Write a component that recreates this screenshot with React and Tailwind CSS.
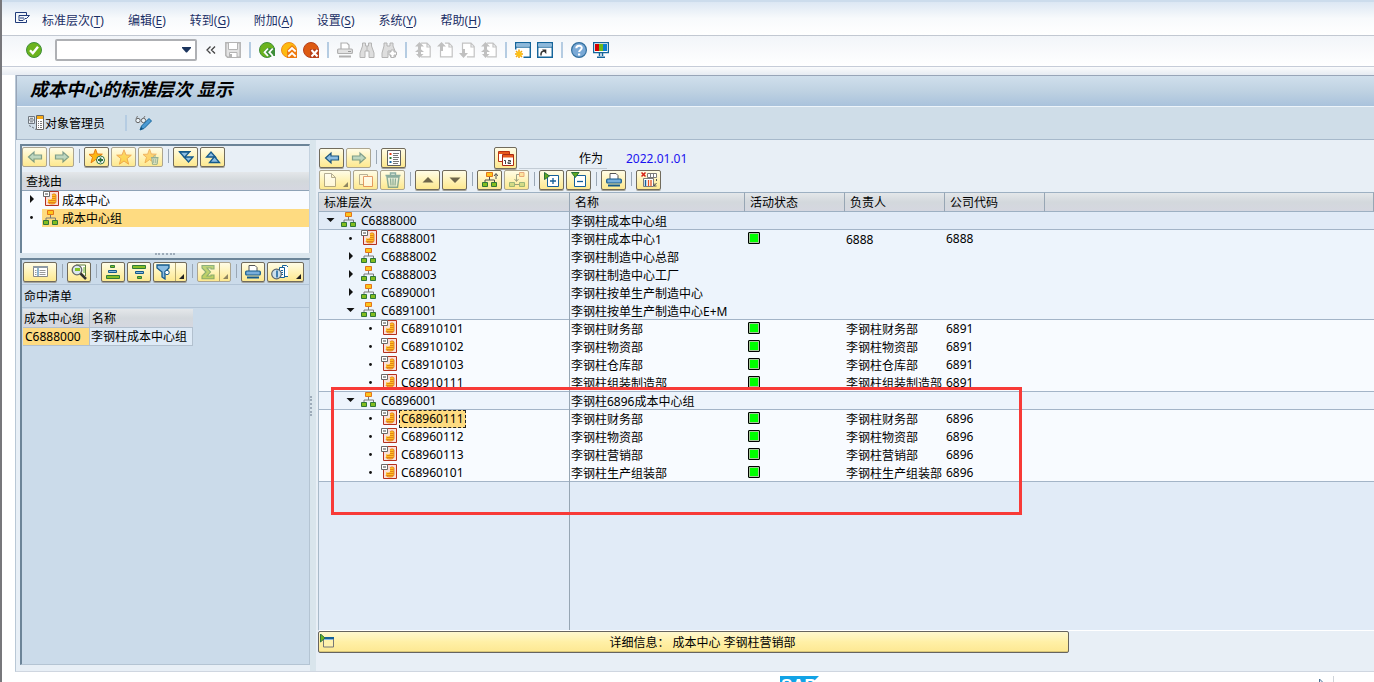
import React from "react";

const svgProps = { width: 16, height: 16, viewBox: "0 0 16 16", fill: "none", "aria-hidden": true, className: "block shrink-0" };
const Svg = ({ children, ...rest }) => <svg {...svgProps} {...rest}>{children}</svg>;

/* ---------- icons ---------- */
const icons = {
  check: (
    <Svg>
      <circle cx="8" cy="8" r="7.5" fill="#6cb31e" stroke="#3f8f3a" />
      <path d="M4 8.2l2.8 3L12 4.8" stroke="#fff" strokeWidth="2.4" />
    </Svg>
  ),
  save: (
    <Svg>
      <path d="M.8.8h14.4v14.4H2.5L.8 13.5z" fill="#e3e3e3" stroke="#b4b4b4" strokeWidth="1.5" />
      <path d="M3.5 1v6.5h9V1M4.5 15v-4.500h7.500V15" fill="#fff" stroke="#b4b4b4" />
      <path d="M6 12v3" stroke="#b4b4b4" strokeWidth="2" />
    </Svg>
  ),
  back: (
    <Svg>
      <circle cx="8" cy="8" r="7.5" fill="#6cb31e" stroke="#3f8f3a" />
      <path d="M4 10l4-4h8v8H8z" fill="#3f8f3a" />
      <path d="M9 6.500L5.500 10.200 9 14M13.800 6.500l-3.500 3.700 3.500 3.800" stroke="#fff" strokeWidth="1.800" />
    </Svg>
  ),
  exit: (
    <Svg>
      <circle cx="8" cy="8" r="7.5" fill="#fdbb10" stroke="#ee8a1c" />
      <path d="M6 8l5-5 5 5v8H6z" fill="#ee7a10" />
      <path d="M7.300 9.500L11 6l3.700 3.500M7.300 14.500L11 11l3.700 3.500" stroke="#fff" strokeWidth="1.800" />
    </Svg>
  ),
  cancel: (
    <Svg>
      <circle cx="8" cy="8" r="7.500" fill="#dd5a12" stroke="#b5401c" />
      <path d="M7 7h9v9H7z" fill="#b8401a" />
      <path d="M8.500 8l6 6.500M14.500 8l-6 6.500" stroke="#fff" strokeWidth="2" />
    </Svg>
  ),
  printGray: (
    <Svg>
      <path d="M4 7V1h6l2 2v4" fill="#fff" stroke="#b0b0b0" strokeWidth="1.200" />
      <rect x=".6" y="7" width="14.800" height="4.500" rx="1" fill="#e2e2e2" stroke="#b0b0b0" strokeWidth="1.200" />
      <path d="M2 14.500h12" stroke="#b0b0b0" strokeWidth="2" />
      <path d="M11 9.500h3" stroke="#999" />
    </Svg>
  ),
  find: (
    <Svg>
      <path d="M3.500 1h3v3h3V1h3v3l2.500 7v4.500h-5V9h-4v6.500H1V11l2.500-7z" fill="#dedede" stroke="#b4b4b4" />
      <path d="M8 4v5" stroke="#b4b4b4" />
    </Svg>
  ),
  findNext: (
    <Svg>
      <path d="M3 1h3v3h3V1h3v3l2.500 6v5h-5V9H7v6.500H1V11l2-7z" fill="#dedede" stroke="#b4b4b4" />
      <path d="M10 8h3v2h2.500v3H13v2.500h-3V13H8v-3h2z" fill="#fff" stroke="#b4b4b4" />
    </Svg>
  ),
  pageFirst: (
    <Svg>
      <path d="M6 1.200h6l3.200 3.200v10.400H6M12 1v4h3.500" fill="#fff" stroke="#c3c3c3" strokeWidth="1.200" />
      <path d="M4.500 0L9 4.500H6V7H3V4.500H0zM4.500 6L9 10H6v2h2.500L4.500 16 1 12h2v-2H0z" fill="#c0c0c0" />
    </Svg>
  ),
  pageUp: (
    <Svg>
      <path d="M3.500 8v6.800h11.700V4.400L12 1.200H8M12 1v4h3.500" fill="#fff" stroke="#c3c3c3" strokeWidth="1.200" />
      <path d="M4.500 0L9 4.500H6V9H3V4.500H0z" fill="#c0c0c0" />
    </Svg>
  ),
  pageDown: (
    <Svg>
      <path d="M3.500 8V1.200H12l3.200 3.200v10.400H8M12 1v4h3.500" fill="#fff" stroke="#c3c3c3" strokeWidth="1.200" />
      <path d="M4.500 16L9 11H6V7H3v4H0z" fill="#c0c0c0" />
    </Svg>
  ),
  newSession: (
    <Svg>
      <path d="M.7.7h14.600v14.600H.7z" fill="#fff" stroke="#15659b" strokeWidth="1.500" />
      <path d="M1.400 1.400h13.200v3.200H1.400z" fill="#8db9dc" />
      <path d="M1 5.200h14" stroke="#15659b" />
      <path d="M0 7.500h8.500V16H0z" fill="#fff" />
      <path d="M4 7.500v8.500M0 12h8M1 9l6 6M7 9l-6 6" stroke="#f5a60c" strokeWidth="1.500" />
      <circle cx="4" cy="12" r="2.500" fill="#fdc313" />
    </Svg>
  ),
  shortcut: (
    <Svg>
      <path d="M.7.7h14.600v14.600H.7z" fill="#fff" stroke="#15659b" strokeWidth="1.500" />
      <path d="M1.400 1.400h13.200v3.200H1.400z" fill="#8db9dc" />
      <path d="M1 5.200h14" stroke="#15659b" />
      <path d="M4 13.500c-.3-2.800.6-4.200 3-4.500" stroke="#333" strokeWidth="1.500" />
      <path d="M5 7.500h4.300V12z" fill="#333" />
    </Svg>
  ),
  help: (
    <Svg>
      <circle cx="8" cy="8" r="7.400" fill="#7aa9d6" stroke="#33709f" strokeWidth="1.200" />
      <path d="M5.300 6.200C5.300 2.700 11 2.900 10.800 6c-.1 1.900-2.700 2-2.700 4" stroke="#fff" strokeWidth="2" />
      <path d="M7 11.500h2.200v2H7z" fill="#fff" />
    </Svg>
  ),
  layout: (
    <Svg>
      <path d="M.6.600h14.800v10H.6z" fill="#fff" stroke="#15659b" strokeWidth="1.300" />
      <path d="M2 2h4v7H2z" fill="#d40000" />
      <path d="M6 2h4v7H6z" fill="#6cb81a" />
      <path d="M10 2h4v7h-4z" fill="#0a7fd0" />
      <path d="M6.500 11v3M9.500 11v3M4 15.200h8" stroke="#15659b" strokeWidth="1.500" />
    </Svg>
  ),
  menu: (
    <Svg>
      <path d="M11.500 4V1.500h-11v10h11V9" stroke="#1f3a7a" />
      <path d="M4 4.500h10.500l-3 3H10L8 9.500H4v-2M4 4.500v3M5 7h4" stroke="#1f3a7a" />
    </Svg>
  ),
  objMgr: (
    <Svg>
      <path d="M.5 1.500h6v7h-6zM.5 5h6" fill="#e9edf1" stroke="#707880" />
      <path d="M2 3.300h3M2 6.800h3M1 10.500l2 1M4 12l2 1.200M7 14l1 .5" stroke="#707880" />
      <path d="M8.500.5h7v14h-7z" fill="#fff" stroke="#666" />
      <path d="M9 1h6v3H9z" fill="#f7aa17" />
      <path d="M10 6.500h1M12 6.500h2M10 8.500h1M12 8.500h2M10 10.500h1M12 10.500h2M10 12.500h1M12 12.500h2" stroke="#777" />
    </Svg>
  ),
  glasses: (
    <Svg width="17" height="16" viewBox="0 0 17 16">
      <path d="M1 4l1.500-3M8 4l2-3" stroke="#777" />
      <circle cx="3" cy="5.500" r="2.200" fill="#e9f2f8" stroke="#666" />
      <circle cx="8.500" cy="5.500" r="2.200" fill="#e9f2f8" stroke="#666" />
      <path d="M5 15l1.500-4L14 3.500 16.500 6 9 13.500z" fill="#4b9ad3" stroke="#15659b" />
      <path d="M5 15l1.200-3 1.800 1.800z" fill="#15507d" />
    </Svg>
  ),
  left: <Svg><path d="M1.500 8L7 3v3h7.500v4H7v3z" fill="#8abce2" stroke="#1c567f" strokeWidth="1.200" /></Svg>,
  right: <Svg><path d="M14.500 8L9 3v3H1.500v4H9v3z" fill="#93c4c4" stroke="#2d6868" strokeWidth="1.200" /></Svg>,
  leftDim: <Svg><path d="M1.500 8L7 3v3h7.500v4H7v3z" fill="#93c4c4" stroke="#2d6868" strokeWidth="1.200" /></Svg>,
  star: <Svg><path d="M8 .8l2 5.200 5.300.2-4.200 3.400 1.500 5.600L8 12l-4.600 3.200 1.500-5.600L.7 6.200 6 6z" fill="#fcc419" stroke="#e87a10" /></Svg>,
  starAdd: (
    <Svg>
      <path d="M6.500 0l1.800 5 5 .2-4 3.200 1.500 5-4.300-2.800-4.500 3.200 1.500-5.500-3.500-2.900 4.700-.2z" fill="#fdb813" stroke="#e87a10" />
      <circle cx="11.500" cy="11" r="4" fill="#fff" stroke="#2e7040" />
      <path d="M11.500 8.500v5M9 11h5" stroke="#2e7040" strokeWidth="1.800" />
    </Svg>
  ),
  starDel: (
    <Svg>
      <path d="M6.500 0l1.800 5 5 .2-4 3.200 1.500 5-4.300-2.800-4.500 3.200 1.500-5.500-3.500-2.900 4.700-.2z" fill="#fdc13a" stroke="#e88a20" />
      <path d="M8.800 9l.7 6.300h4.600l.8-6.300z" fill="#e0ede9" stroke="#4d8580" />
      <path d="M8 8.500h7.500M10.500 7h2.500M10.800 10v4M12.800 10v4" stroke="#4d8580" />
    </Svg>
  ),
  expandAll: <Svg><path d="M6 8h9l-4.500 5z" fill="#8cbde2" stroke="#155a8c" strokeWidth="1.300" /><path d="M1.500 3h10l-5 5.500z" fill="#8cbde2" stroke="#155a8c" strokeWidth="1.300" /><path d="M1 2.500h12" stroke="#155a8c" /></Svg>,
  collapseAll: <Svg><path d="M1.500 8h9L6 3z" fill="#8cbde2" stroke="#155a8c" strokeWidth="1.300" /><path d="M4.500 13.500h10L9.500 7.500z" fill="#8cbde2" stroke="#155a8c" strokeWidth="1.300" /></Svg>,
  list: (
    <Svg>
      <path d="M1.500.5h13v15h-13z" fill="#fff" stroke="#5f5f5f" />
      <path d="M3.500 3h2v2h-2z" fill="#e5401a" />
      <path d="M3.500 7h2v2h-2z" fill="#2d7f35" />
      <path d="M3.500 11h2v2h-2z" fill="#1768a5" />
      <path d="M7 3.500h6M7 5.500h5M7 7.500h6M7 9.500h5M7 11.500h6M7 13.500h5" stroke="#777" />
    </Svg>
  ),
  calendar: (
    <Svg width="17" height="17" viewBox="0 0 17 17">
      <path d="M1.500 1.500h11v10h-11z" fill="#fff" stroke="#b73216" />
      <path d="M2 2h10v2H2z" fill="#e75a1c" />
      <path d="M5.500 4.500h11v11h-11z" fill="#fff" stroke="#a92a15" />
      <path d="M6 5h10v2.500H6z" fill="#e75a1c" />
      <path d="M7 10.500h1.500V14M11 10.500h2.500V12H11v1.500h3" stroke="#444" />
    </Svg>
  ),
  newDoc: <Svg><path d="M2.500 1.500h7l4 4v9h-11z M9.500 1.500v4h4" fill="#fff" stroke="#857c6b" /></Svg>,
  copy: (
    <Svg>
      <path d="M1.500 2.500h8v10h-8z" fill="#fff8df" stroke="#8b8270" />
      <path d="M5.500 4.500h9v10h-9z" fill="#fff" stroke="#d2612f" />
    </Svg>
  ),
  trash: (
    <Svg>
      <path d="M.5 3.500h15M5.500 3V1h5v2M2 5l1.500 10.300h9L14 5z" fill="#d9ebe8" stroke="#3d7c80" strokeWidth="1.400" />
      <path d="M5.500 6.500l.5 7M8 6.500v7M10.500 6.500l-.5 7" stroke="#3d7c80" strokeWidth="1.200" />
    </Svg>
  ),
  triUp: <Svg><path d="M2.500 10.500h11L8 5z" fill="#6e664b" /></Svg>,
  triDown: <Svg><path d="M2.500 5.500h11L8 11z" fill="#6e664b" /></Svg>,
  org: (
    <Svg>
      <path d="M7.500 5v3M3 10V8h9.500v2" stroke="#787878" />
      <path d="M4.500.500h6v4h-6z" fill="#fdc61c" stroke="#e4731b" />
      <path d="M.5 10.500h5v4h-5zM9.500 10.500h5v4h-5z" fill="#82bd1e" stroke="#2f7638" />
    </Svg>
  ),
  orgUp: (
    <Svg>
      <path d="M7.500 5v3M3 10V8h9.500v2M14 7V2M12 4l2-2.500 2 2.500" stroke="#4e4e4e" />
      <path d="M4.500.500h6v4h-6z" fill="#fdc61c" stroke="#e4731b" />
      <path d="M.5 10.500h5v4h-5zM9.500 10.500h5v4h-5z" fill="#82bd1e" stroke="#2f7638" />
    </Svg>
  ),
  orgMove: (
    <Svg>
      <path d="M10 2.500H7.500V9M5.500 7l2 2.500 2-2.500M5 12.500h5" stroke="#5c6b5f" />
      <path d="M10.500.500h4.500v4h-4.500z" fill="#fdd67a" stroke="#df763d" />
      <path d="M.5 10.500h5v4h-5zM10.500 10.500h5v4h-5z" fill="#b5cf71" stroke="#5b925c" />
    </Svg>
  ),
  expandNode: (
    <Svg>
      <path d="M3.500 3.500h11v11h-11z" fill="#fff" stroke="#15609a" />
      <path d="M9 6v6M6 9h6" stroke="#15609a" strokeWidth="1.300" />
      <path d="M.5.5l5 3.500-5 3.500z" fill="#5fa71f" stroke="#28703a" />
    </Svg>
  ),
  collapseNode: (
    <Svg>
      <path d="M3.500 3.500h11v11h-11z" fill="#fff" stroke="#15609a" />
      <path d="M6 9.500h6" stroke="#15609a" strokeWidth="1.300" />
      <path d="M.5.500h7.500L4.300 5.500z" fill="#5fa71f" stroke="#28703a" />
    </Svg>
  ),
  print: (
    <Svg>
      <path d="M4 7V1.500h6l2 2V7" fill="#fff" stroke="#555" />
      <rect x=".7" y="7" width="14.600" height="4" rx="1" fill="#78aedb" stroke="#155a8c" strokeWidth="1.200" />
      <path d="M2 13.500h12" stroke="#155a8c" strokeWidth="2" />
    </Svg>
  ),
  report: (
    <Svg>
      <path d="M6.500 1.500h9v4h-9zM9.500 1.500v4M12.500 1.500v4M2.500 6.500h10v8h-10z" fill="#fff" stroke="#7b7b7b" />
      <path d="M.5.500l4 4M4.500.500l-4 4" stroke="#d72216" strokeWidth="1.500" />
      <path d="M4.500 8v6" stroke="#15609a" strokeWidth="1.500" />
      <path d="M7.500 8v6M10 8v6" stroke="#e3501c" strokeWidth="1.300" />
      <path d="M15.500 7v2M15.500 11l-2.500 3M13 11.500V14h2.500" stroke="#555" />
    </Svg>
  ),
  center: (
    <Svg>
      <path d="M2.500.500h13v14h-13z" fill="#fbe0d8" stroke="#b5301e" />
      <path d="M9 4c0-1.500 4-1.500 4 0v6.500c0 2-2 2.500-4 2.500-2.500 0-4-.8-4-2V8c1 1 4 .8 4-1z" fill="#fdc023" />
      <path d="M9 4c0-1.500 4-1.500 4 0v6.500c0 2-2 2.500-4 2.500-2.500 0-4-.8-4-2M9 5.500h3.500M9 7.500h3.500M6 9.500h6.500M6 11.500h6" stroke="#de7417" strokeWidth=".8" />
      <path d="M.500.500h6v5h-6z" fill="#fff" stroke="#6a6a6a" />
      <path d="M2 3h3" stroke="#444" />
    </Svg>
  ),
  detail: (
    <Svg>
      <path d="M1.500 2.500h14v10h-14z" fill="#fff" stroke="#888" />
      <path d="M1 2h15v2H1z" fill="#8f9aa3" />
      <path d="M6 4v8" stroke="#1c6aa0" />
      <path d="M3 6.500h1.500M3 8.500h1.500M3 10.500h1.500M7.500 6.500h6M7.500 8.500h6M7.500 10.500h6" stroke="#999" />
    </Svg>
  ),
  search: (
    <Svg>
      <path d="M5 1h9.500v11" fill="#fff" stroke="#5f7f40" />
      <path d="M12 4h2M12 6h2M12 8h2" stroke="#6cb31e" />
      <circle cx="6" cy="6" r="4.800" fill="#dbe8ee" stroke="#666" strokeWidth="1.300" />
      <path d="M4 4h5v3H4z" fill="#85c226" />
      <path d="M9.500 9.500l5.500 5.500" stroke="#333" strokeWidth="2.500" />
    </Svg>
  ),
  asc: <Svg><path d="M5.500 1.500h4v2h-4zM1.500 11.500h13v3h-13z" fill="#86bd25" stroke="#2f7c3a" /><path d="M3.500 6.500h8v2h-8z" fill="#86b7dd" stroke="#155a8c" /></Svg>,
  desc: <Svg><path d="M1.500 1.500h13v3h-13zM6.500 12.500h4v2h-4z" fill="#86bd25" stroke="#2f7c3a" /><path d="M4.500 7.500h8v2h-8z" fill="#86b7dd" stroke="#155a8c" /></Svg>,
  filter: <Svg><path d="M1 1h12v3L9 8v7l-3-2V8L1 4z" fill="#8bbde3" stroke="#155a8c" strokeWidth="1.300" /><circle cx="11" cy="8.500" r="2.200" stroke="#155a8c" fill="#fff" /></Svg>,
  sum: <Svg><path d="M2 1.500h12V5h-3V4H7l3.500 4L7 12h4v-1h3v3.700H2V12l4-4-4-4z" fill="#94bd3c" stroke="#408044" strokeWidth="1.100" /></Svg>,
  view: (
    <Svg width="18">
      <path d="M11.500 1.500h4l2 2v9h-6z" fill="#fff" stroke="#15609a" />
      <path d="M8.500 3.500h5v10h-5z" fill="#fff" stroke="#15609a" />
      <path d="M10 6.500h2M10 8.500h2M10 10.500h2" stroke="#15609a" />
      <circle cx="5.500" cy="10" r="4.800" fill="#cbdfed" stroke="#5d676e" strokeWidth="1.200" />
      <path d="M6 6.500v7" stroke="#15609a" strokeWidth="1.500" />
    </Svg>
  ),
  openDetail: (
    <Svg>
      <path d="M4.500 4.500h10V13h-10z" fill="#fff1ae" stroke="#777" />
      <path d="M4 4h11" stroke="#15609a" strokeWidth="2" />
      <path d="M5 5.500h9" stroke="#8db9dc" />
      <path d="M1.500 0v8l4.500-4z" fill="#6cb31e" stroke="#2e7440" />
    </Svg>
  ),
};

/* ---------- small building blocks ---------- */
const Sep = () => (
  <span className="flex h-4 w-1.5 shrink-0 justify-center">
    <span className="h-3.5 w-px bg-[#9aa7b5]" />
  </span>
);

const BlueSep = () => (
  <span className="flex h-4 w-1.5 shrink-0 justify-center">
    <span className="h-4 w-0.5 bg-[#b5cce2]" />
  </span>
);

function IconButton({ icon, label, disabled }) {
  return (
    <button type="button" aria-label={label} disabled={disabled} className="block h-4 w-4 shrink-0">
      {icons[icon]}
    </button>
  );
}

function ToolButton({ icon, label, dim, width = "w-[25px]", height = "h-5", drop, split }) {
  return (
    <button
      type="button"
      aria-label={label}
      disabled={dim}
      className={`relative flex shrink-0 items-center rounded-xs border bg-linear-to-b from-[#fffce6] via-[#fff3b8] to-[#fde88f] ${width} ${height} ${
        drop ? "justify-start pl-0.5" : "justify-center"
      } ${dim ? "border-[#aca590]" : "border-[#716b5c] shadow-[0_1px_0_#a3a29a]"}`}
    >
      <span className={dim ? "opacity-60" : ""}>{icons[icon]}</span>
      {split && <span className="absolute inset-y-0 right-2.5 w-px bg-[#b3a671]" />}
      {drop && (
        <svg className={`absolute right-0.5 bottom-0.5 ${dim ? "opacity-50" : ""}`} width="5" height="5" viewBox="0 0 5 5" aria-hidden="true">
          <path d="M5 0v5H0z" fill="#222" />
        </svg>
      )}
    </button>
  );
}

function Marker({ kind }) {
  return (
    <svg width="20" height="18" viewBox="0 0 20 18" className="block shrink-0" aria-hidden="true">
      {kind === "open" && <path d="M5.500 6h8L9.500 10z" fill="#111" />}
      {kind === "closed" && <path d="M8 4v8l4-4z" fill="#111" />}
      {kind === "leaf" && <circle cx="9.500" cy="8.500" r="1.400" fill="#111" />}
    </svg>
  );
}

/* ---------- data ---------- */
const menus = [
  ["标准层次", "T"], ["编辑", "E"], ["转到", "G"], ["附加", "A"], ["设置", "S"], ["系统", "Y"], ["帮助", "H"],
];

const rows = [
  { id: "C6888000", level: 0, kind: "open", name: "李钢柱成本中心组", line: true },
  { id: "C6888001", level: 1, kind: "leaf", name: "李钢柱成本中心1", owner: "6888", code: "6888" },
  { id: "C6888002", level: 1, kind: "closed", name: "李钢柱制造中心总部" },
  { id: "C6888003", level: 1, kind: "closed", name: "李钢柱制造中心工厂" },
  { id: "C6890001", level: 1, kind: "closed", name: "李钢柱按单生产制造中心" },
  { id: "C6891001", level: 1, kind: "open", name: "李钢柱按单生产制造中心E+M", line: true },
  { id: "C68910101", level: 2, kind: "leaf", name: "李钢柱财务部", owner: "李钢柱财务部", code: "6891" },
  { id: "C68910102", level: 2, kind: "leaf", name: "李钢柱物资部", owner: "李钢柱物资部", code: "6891" },
  { id: "C68910103", level: 2, kind: "leaf", name: "李钢柱仓库部", owner: "李钢柱仓库部", code: "6891" },
  { id: "C68910111", level: 2, kind: "leaf", name: "李钢柱组装制造部", owner: "李钢柱组装制造部", code: "6891", line: true },
  { id: "C6896001", level: 1, kind: "open", name: "李钢柱6896成本中心组", line: true },
  { id: "C68960111", level: 2, kind: "leaf", name: "李钢柱财务部", owner: "李钢柱财务部", code: "6896", selected: true },
  { id: "C68960112", level: 2, kind: "leaf", name: "李钢柱物资部", owner: "李钢柱物资部", code: "6896" },
  { id: "C68960113", level: 2, kind: "leaf", name: "李钢柱营销部", owner: "李钢柱营销部", code: "6896" },
  { id: "C68960101", level: 2, kind: "leaf", name: "李钢柱生产组装部", owner: "李钢柱生产组装部", code: "6896", line: true },
];

const levelBg = ["bg-[#e1ebf7]", "bg-[#edf4fc]", "bg-[#f8fbff]"];
const levelPad = ["pl-0.5", "pl-[22px]", "pl-[42px]"];
const headGray = "bg-linear-to-b from-[#e4e7ea] via-[#d3d8dc] to-[#d5d7e0]";

/* ---------- sections ---------- */
function MenuBar() {
  return (
    <nav className="flex h-9 shrink-0 items-center border-t-2 border-b border-t-[#ccdcec] border-b-[#c2c8d2] bg-linear-to-b from-[#dce7f3] via-[#f8fafc] to-white pl-[13px] text-[#1b2f66]">
      <button type="button" aria-label="菜单" className="h-4 w-4">{icons.menu}</button>
      <div className="ml-[11px] flex gap-6 pt-[5px]">
        {menus.map(([label, key]) => (
          <button key={key} type="button" className="whitespace-nowrap">
            {label}(<span className="underline underline-offset-2">{key}</span>)
          </button>
        ))}
      </div>
    </nav>
  );
}

function SystemBar() {
  return (
    <div className="flex h-[31px] shrink-0 items-center gap-1.5 border-b border-[#c6ccd8] bg-linear-to-b from-[#f2f5f9] to-white pb-0.5 pl-6">
      <IconButton icon="check" label="确认" />
      <div className="relative ml-[7px] w-[142px]">
        <input
          type="text"
          aria-label="命令"
          className="block h-[22px] w-full rounded-xs border-2 border-[#aeb0b4] bg-white px-1 outline-none"
        />
        <svg className="absolute top-2 right-1.5" width="9" height="6" viewBox="0 0 9 6" aria-hidden="true">
          <path d="M0 0h9v1L5 5.500H4L0 1z" fill="#1c355e" />
        </svg>
      </div>
      <button type="button" aria-label="收起" className="flex h-4 w-4 items-center justify-center">
        <svg width="10" height="8" viewBox="0 0 10 8" fill="none" aria-hidden="true">
          <path d="M4.500.500L1 4l3.500 3.500M9 .500L5.500 4 9 7.500" stroke="#444" strokeWidth="1.300" />
        </svg>
      </button>
      <IconButton icon="save" label="保存" disabled />
      <BlueSep />
      <IconButton icon="back" label="返回" />
      <IconButton icon="exit" label="退出" />
      <IconButton icon="cancel" label="取消" />
      <BlueSep />
      <IconButton icon="printGray" label="打印" disabled />
      <IconButton icon="find" label="查找" disabled />
      <IconButton icon="findNext" label="查找下一个" disabled />
      <BlueSep />
      <IconButton icon="pageFirst" label="第一页" disabled />
      <IconButton icon="pageUp" label="上一页" disabled />
      <IconButton icon="pageDown" label="下一页" disabled />
      <IconButton icon="pageFirst" label="最后一页" disabled />
      <BlueSep />
      <IconButton icon="newSession" label="新建会话" />
      <IconButton icon="shortcut" label="创建快捷方式" />
      <BlueSep />
      <IconButton icon="help" label="帮助" />
      <IconButton icon="layout" label="定制本地布局" />
    </div>
  );
}

function FinderPanel() {
  return (
    <section className="h-[109px] shrink-0 border-t-2 border-r border-l-2 border-[#6c8498] border-r-[#c4d2df] bg-[#f8fbff]">
      <div className="flex h-[26px] items-center gap-0.5 bg-[#e8eff6] pb-1">
        <ToolButton icon="leftDim" label="后退" dim />
        <ToolButton icon="right" label="前进" dim />
        <Sep />
        <ToolButton icon="starAdd" label="添加收藏" />
        <ToolButton icon="star" label="收藏" dim />
        <ToolButton icon="starDel" label="删除收藏" dim />
        <Sep />
        <ToolButton icon="expandAll" label="全部展开" />
        <ToolButton icon="collapseAll" label="全部折叠" />
      </div>
      <h2 className={`flex h-[19px] items-center border-b border-[#8fa3b6] pt-0.5 pl-1 ${headGray}`}>查找由</h2>
      <ul>
        <li className="flex h-[18px] items-center">
          <Marker kind="closed" />
          <span className="ml-px pb-0.5">{icons.center}</span>
          <span className="ml-[3px] pt-0.5">成本中心</span>
        </li>
        <li className="flex h-[18px] items-center">
          <Marker kind="leaf" />
          <span className="flex h-full grow items-center bg-[#fedb81] pl-px">
            {icons.org}
            <span className="ml-[3px] pt-0.5">成本中心组</span>
          </span>
        </li>
      </ul>
    </section>
  );
}

function HitPanel() {
  return (
    <section className="min-h-0 flex-1 border-t-2 border-r border-b border-l-2 border-[#6c8498] border-r-[#b4c4d3] border-b-[#b4c4d3] bg-[#cbdbea]">
      <div className="flex h-[25px] items-center gap-0.5 border-b border-[#b2c4d6] pl-px">
        <ToolButton icon="detail" label="详细" width="w-[34px]" />
        <Sep />
        <ToolButton icon="search" label="查找" width="w-6" />
        <Sep />
        <ToolButton icon="asc" label="升序" width="w-6" />
        <ToolButton icon="desc" label="降序" width="w-6" />
        <ToolButton icon="filter" label="过滤" width="w-[34px]" drop split />
        <Sep />
        <ToolButton icon="sum" label="合计" width="w-[34px]" dim drop split />
        <Sep />
        <ToolButton icon="print" label="打印" width="w-6" />
        <ToolButton icon="view" label="视图" width="w-[37px]" drop />
      </div>
      <h2 className="flex h-[23px] items-center border-b border-[#b2c4d6] pt-0.5 pl-0.5">命中清单</h2>
      <div className="border-t border-[#cbdbea] pl-px">
        <table className="table-fixed border-separate border-spacing-0">
          <colgroup>
            <col className="w-[67px]" />
            <col className="w-[103px]" />
          </colgroup>
          <thead>
            <tr>
              <th className={`h-[19px] border-r border-b border-[#b2c0ce] p-0 pt-0.5 pl-px text-left font-normal whitespace-nowrap ${headGray}`}>成本中心组</th>
              <th className={`h-[19px] border-b border-[#b2c0ce] p-0 pt-0.5 pl-0.5 text-left font-normal ${headGray}`}>名称</th>
            </tr>
          </thead>
          <tbody>
            <tr>
              <td className="h-[18px] border-r border-b border-[#b2c0ce] bg-[#fedb81] p-0 pl-0.5">C6888000</td>
              <td className="h-[18px] border-r border-b border-[#b2c0ce] bg-[#deeaf6] p-0 pl-px whitespace-nowrap">李钢柱成本中心组</td>
            </tr>
          </tbody>
        </table>
      </div>
    </section>
  );
}

function HierarchyTable() {
  const th = `h-5 border-t border-r border-b border-[#9db0c2] border-r-[#97a6b4] p-0 pt-0.5 pl-[5px] text-left leading-4 font-normal ${headGray}`;
  return (
    <div className="flex min-h-0 flex-1 flex-col border-b border-l border-b-white border-l-[#a9bac9] bg-[#e1ebf7]">
      <table className="w-full shrink-0 table-fixed border-separate border-spacing-0">
        <colgroup>
          <col className="w-[251px]" />
          <col className="w-[175px]" />
          <col className="w-[100px]" />
          <col className="w-[100px]" />
          <col className="w-[100px]" />
          <col />
        </colgroup>
        <thead>
          <tr>
            <th className={th}>标准层次</th>
            <th className={th}>名称</th>
            <th className={th}>活动状态</th>
            <th className={th}>负责人</th>
            <th className={th}>公司代码</th>
            <td className={th} />
          </tr>
        </thead>
        <tbody>
          {rows.map((r) => {
            const cell = `h-[18px] overflow-hidden p-0 pl-px align-top whitespace-nowrap ${levelBg[r.level]} ${
              r.line ? "shadow-[inset_0_-1px_0_#a3b4c7]" : ""
            }`;
            return (
              <tr key={r.id}>
                <td className={`${cell} border-r border-r-[#97a6b4]`}>
                  <div className={`-ml-px flex h-[18px] items-center ${levelPad[r.level]}`}>
                    <Marker kind={r.kind} />
                    <span className="pb-0.5">{r.kind === "leaf" ? icons.center : icons.org}</span>
                    <span
                      className={`ml-0.5 border border-dashed px-px leading-4 ${
                        r.selected ? "border-[#222] bg-[#fedb81]" : "border-transparent"
                      }`}
                    >
                      {r.id}
                    </span>
                  </div>
                </td>
                <td className={`${cell} pt-0.5 leading-4`}>{r.name}</td>
                <td className={`${cell} pt-0.5`}>
                  {r.code && (
                    <span
                      role="img"
                      aria-label="活动"
                      className="ml-0.5 block h-3 w-3 rounded-[1px] border border-black bg-[#00ff00] shadow-[inset_0_0_0_1px_#a5c99a]"
                    />
                  )}
                </td>
                <td className={`${cell} pt-0.5 leading-4`}>{r.owner}</td>
                <td className={`${cell} leading-[18px]`}>{r.code}</td>
                <td className={cell} />
              </tr>
            );
          })}
        </tbody>
      </table>
      <div className="w-[251px] flex-1 border-r border-[#97a6b4]" />
    </div>
  );
}

function MainPanel() {
  return (
    <main className="relative flex min-w-0 flex-1 flex-col bg-[#e8eff6] pt-[7px] pb-[18px] pl-0.5">
      <div className="flex h-[22px] items-center gap-0.5 pl-px">
        <ToolButton icon="left" label="后退" />
        <ToolButton icon="right" label="前进" dim />
        <Sep />
        <ToolButton icon="list" label="列表" />
        <span className="w-[84px]" />
        <ToolButton icon="calendar" label="选择日期" width="w-[23px]" height="h-[22px]" />
        <span className="flex h-full w-[88px] items-center justify-end border-b border-[#c3ccd5] pt-0.5 pr-1">作为</span>
        <time className="pt-0.5 pl-[17px] text-[#1a12f0]">2022.01.01</time>
      </div>
      <div className="flex h-[23px] items-center gap-0.5 pb-px pl-px">
        <ToolButton icon="newDoc" label="新建" width="w-8" dim drop />
        <ToolButton icon="copy" label="复制" dim />
        <ToolButton icon="trash" label="删除" dim />
        <Sep />
        <ToolButton icon="triUp" label="上移" />
        <ToolButton icon="triDown" label="下移" />
        <Sep />
        <ToolButton icon="orgUp" label="上级层次" />
        <ToolButton icon="orgMove" label="分配" dim />
        <Sep />
        <ToolButton icon="expandNode" label="展开节点" />
        <ToolButton icon="collapseNode" label="折叠节点" />
        <Sep />
        <ToolButton icon="print" label="打印" />
        <Sep />
        <ToolButton icon="report" label="报表" />
      </div>
      <HierarchyTable />
      <button
        type="button"
        className="relative flex h-[22px] w-full max-w-[751px] shrink-0 items-center justify-center rounded-xs border border-[#66645f] bg-linear-to-b from-[#fff8cf] via-[#fff0a6] to-[#fde892] shadow-[inset_0_-1px_0_#d9c779]"
      >
        <span className="absolute top-0.5 left-0">{icons.openDetail}</span>
        <span className="pt-0.5 pl-[18px] whitespace-pre">详细信息： 成本中心 李钢柱营销部</span>
      </button>
      <div className="pointer-events-none absolute top-[247px] left-[15px] h-32 w-[691px] border-3 border-[#f83a37]" />
    </main>
  );
}

export default function App() {
  return (
    <div className="flex h-screen flex-col overflow-hidden border-l-2 border-[#77777b] bg-white font-['Noto_Sans','Noto_Sans_CJK_SC',sans-serif] text-xs leading-4 text-black">
      <MenuBar />
      <SystemBar />
      <div className="h-2 shrink-0 bg-linear-to-b from-[#fafbfc] to-[#e6ebf2]" />
      <div className="ml-[13px] flex min-h-0 flex-1 flex-col border-b border-l border-b-[#cfd6e0] border-l-[#b9c8d6]">
        <header className="shrink-0 border-t border-l border-[#98a5b8] bg-[#cfdde8]">
          <h1 className="flex h-[31px] items-center border-b border-[#edf4fa] bg-linear-to-b from-[#d0dfec] via-[#bfd2e2] to-[#a9c2dc] pb-1 pl-[13px] text-lg font-bold italic">
            成本中心的标准层次 显示
          </h1>
          <div className="flex h-[33px] items-center border-b border-[#a7b9cb] pl-[11px]">
            <button type="button" className="flex items-center gap-px">
              {icons.objMgr}
              <span className="pt-0.5">对象管理员</span>
            </button>
            <span className="ml-[18px]"><BlueSep /></span>
            <button type="button" aria-label="显示/更改" className="ml-1.5">{icons.glasses}</button>
          </div>
        </header>
        <div className="flex min-h-0 flex-1">
          <aside className="flex w-[294px] shrink-0 flex-col bg-[#e8eff6] pt-1 pb-1.5 pl-1">
            <FinderPanel />
            <div className="flex h-[5px] shrink-0 items-start justify-center bg-[#dbe6ee]">
              <span className="w-5 border-t-2 border-dotted border-[#9dabb9]" />
            </div>
            <HitPanel />
          </aside>
          <div className="flex w-1.5 shrink-0 items-center justify-start bg-[#d9e5ec]">
            <span className="h-5 border-l-2 border-dotted border-[#9dabb9]" />
          </div>
          <MainPanel />
        </div>
      </div>
      <footer className="flex h-2.5 shrink-0 items-start overflow-hidden pt-1 pr-10">
        <div className="flex flex-1 justify-center pl-[278px]">
          <svg width="39" height="20" viewBox="0 0 39 20" role="img" aria-label="SAP">
            <path d="M0 0h39L19 20H0z" fill="#12a3e6" />
            <text x="1" y="15" fill="#fff" fontFamily="Liberation Sans, sans-serif" fontSize="17" fontWeight="bold">SAP</text>
          </svg>
        </div>
        <svg className="mt-[3px]" width="10" height="12" viewBox="0 0 10 12" aria-hidden="true">
          <path d="M.500 11V0l8 8z" fill="#e9f1f8" stroke="#4a7396" />
        </svg>
        <span className="ml-1 h-3 w-px bg-[#cfd4d9]" />
      </footer>
    </div>
  );
}
